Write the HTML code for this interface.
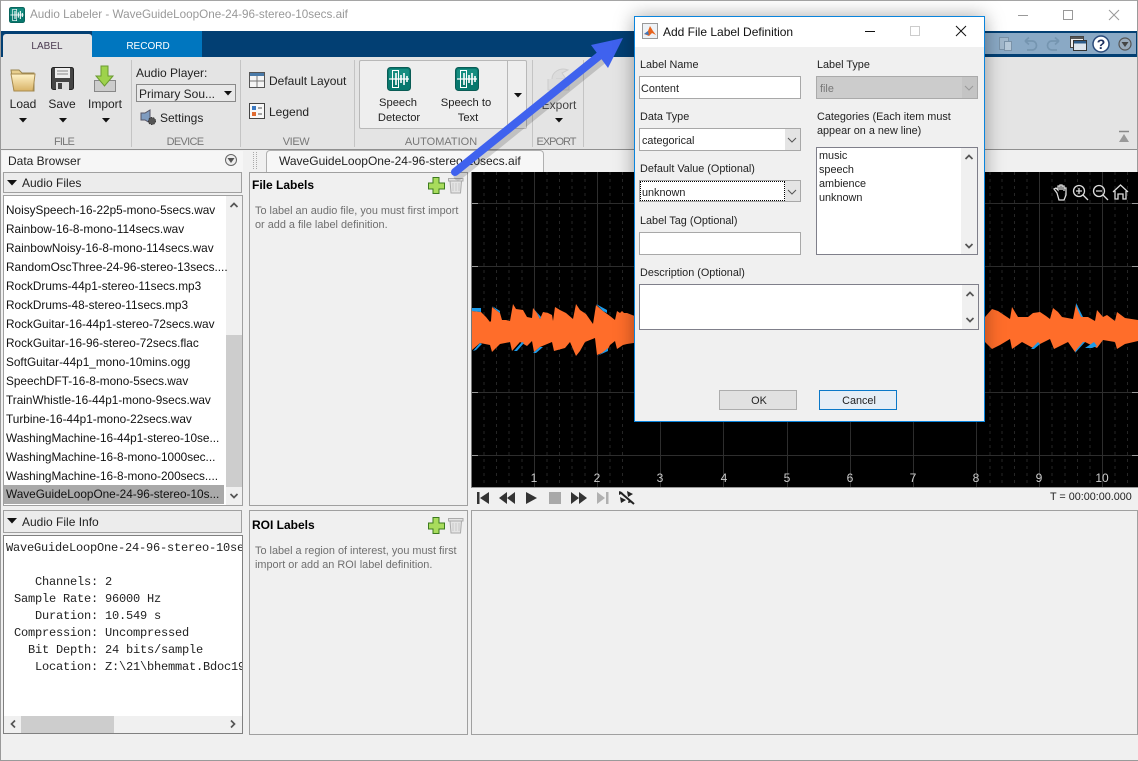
<!DOCTYPE html>
<html><head><meta charset="utf-8"><style>
html,body{margin:0;padding:0;width:1138px;height:761px;overflow:hidden;background:#f0f0f0}
body{position:relative;font-family:"Liberation Sans",sans-serif;font-size:12px;color:#222}
.a{position:absolute}
.t{position:absolute;white-space:nowrap;line-height:14px}
.c{transform:translateX(-50%);text-align:center}
.g{color:#777;font-size:11px}
.row{position:absolute;left:6px;white-space:nowrap;line-height:19px;height:19px;color:#111;font-size:11.8px}
.m{position:absolute;left:6px;white-space:pre;font-family:"Liberation Mono",monospace;font-size:12px;letter-spacing:-.2px;line-height:14px;color:#222}
.box{position:absolute;box-sizing:border-box;background:#fff;border:1px solid #a8a8a8}
.dk{border-color:#7f7f8a}
svg{position:absolute;overflow:visible}
.dl{font-size:10.85px;margin-top:1px}
.hint{color:#6f6f6f;font-size:10.9px;line-height:14px}
</style></head><body>
<svg width="0" height="0" style="position:absolute"><defs>
<g id="app"><rect x=".5" y=".5" width="23" height="23" rx="3" fill="#08786e" stroke="#0a5c55"/><rect x="2" y="2" width="20" height="10" rx="2" fill="#1f9b8c" opacity=".6"/><path d="M2 12H22" stroke="#fff" stroke-width="1.2"/><path d="M9 6V18M14 8V16M17 6V18M20 9V15" stroke="#fff" stroke-width="1.6"/><rect x="5.5" y="3.5" width="6" height="17" fill="none" stroke="#fff"/></g>
<path id="up" d="M-3.5 2L0-1.5L3.500 2" fill="none" stroke="#555" stroke-width="1.700"/>
<path id="dn" d="M-3.5-2L0 1.500L3.500-2" fill="none" stroke="#555" stroke-width="1.700"/>
<path id="tri" d="M-4-2H4L0 2.500Z" fill="#111"/>
</defs></svg>

<!-- window frame & titlebar -->
<div class="a" style="left:0;top:0;width:1138px;height:31px;background:#fff;border-top:1px solid #a5a5a5;box-sizing:border-box"></div>
<svg style="left:9px;top:7px" width="16" height="16" viewBox="0 0 24 24"><use href="#app"/></svg>
<div class="t" style="left:30px;top:8px;color:#999;font-size:11.700px">Audio Labeler - WaveGuideLoopOne-24-96-stereo-10secs.aif</div>
<svg style="left:0;top:0" width="1138" height="31"><path d="M1018 15.500H1028" stroke="#999"/><rect x="1063.500" y="10.500" width="9" height="9" fill="none" stroke="#999"/><path d="M1109 10L1119 20M1119 10L1109 20" stroke="#999"/></svg>

<!-- tab strip -->
<div class="a" style="left:1px;top:31px;width:1136px;height:26px;background:#023f73"></div>
<div class="a" style="left:92px;top:31px;width:110px;height:26px;background:#0076bf"></div>
<div class="a" style="left:3px;top:34px;width:89px;height:23px;background:#e4e4e4;border-radius:3px 3px 0 0"></div>
<div class="t c" style="left:47px;top:39.500px;color:#4a3a50;font-size:10px;">LABEL</div>
<div class="t c" style="left:148px;top:39.500px;color:#fff;font-size:10px;">RECORD</div>
<div class="a" style="left:985px;top:33px;width:151px;height:21px;background:#8aa9c5"></div>
<svg style="left:985px;top:33px" width="151" height="21">
<rect x="14.500" y="4.500" width="9" height="12" fill="#a2b8cc" stroke="#7a92a8"/><rect x="19.500" y="8.500" width="7" height="9" fill="#b6c8d8" stroke="#7a92a8"/>
<path d="M40 8H47C53 8 53 17 47 17H42M40 8L44 4.500M40 8L44 11.500" fill="none" stroke="#7595b0" stroke-width="1.700"/>
<path d="M74 8H67C61 8 61 17 67 17H72M74 8L70 4.500M74 8L70 11.500" fill="none" stroke="#7595b0" stroke-width="1.700"/>
<rect x="85.500" y="3.500" width="13" height="11" fill="#eee" stroke="#444"/><rect x="86" y="4" width="12" height="2" fill="#555"/><rect x="88.500" y="7.500" width="13" height="10" fill="#dce4ec" stroke="#333"/><rect x="89" y="8" width="12" height="2.500" fill="#2d5c8a"/>
<circle cx="116" cy="11" r="8" fill="#fff" stroke="#2a4a7a" stroke-width="1.500"/><text x="116" y="16" text-anchor="middle" font-family="Liberation Sans" font-size="14" font-weight="bold" fill="#1d2f5e">?</text>
<circle cx="140" cy="11" r="6" fill="#9ab" stroke="#555" stroke-width="1.200"/><path d="M136.500 9H143.500L140 14Z" fill="#444"/>
</svg>

<!-- ribbon -->
<div class="a" style="left:1px;top:57px;width:1136px;height:92px;background:#e4e4e4;border-bottom:1px solid #8f8f8f;box-sizing:content-box"></div>
<div class="a" style="left:131px;top:60px;width:1px;height:87px;background:#c4c4c4"></div>
<div class="a" style="left:240px;top:60px;width:1px;height:87px;background:#c4c4c4"></div>
<div class="a" style="left:354px;top:60px;width:1px;height:87px;background:#c4c4c4"></div>
<div class="a" style="left:532px;top:60px;width:1px;height:87px;background:#c4c4c4"></div>
<div class="a" style="left:583px;top:60px;width:1px;height:87px;background:#c4c4c4"></div>
<div class="a" style="left:359px;top:60px;width:168px;height:69px;box-sizing:border-box;background:#eee;border:1px solid #b8b8b8;border-radius:2px"></div>
<div class="a" style="left:507px;top:60px;width:1px;height:69px;background:#b8b8b8"></div>
<svg style="left:0;top:57px" width="1138" height="92">
<defs><linearGradient id="fo" x1="0" y1="0" x2="0" y2="1"><stop offset="0" stop-color="#fff3c8"/><stop offset="1" stop-color="#d8b266"/></linearGradient></defs>
<path d="M11 13H19L22 16H34V34H14Z" fill="#e8cf8e" stroke="#9a8650"/><path d="M11 17H35L33 34H14Z" fill="url(#fo)" stroke="#a88c50"/>
<rect x="51.500" y="10.500" width="22" height="22" rx="2" fill="#444" stroke="#222"/><rect x="55" y="11" width="15" height="10" fill="#eee"/><path d="M57 14H68M57 17H68" stroke="#888"/><rect x="56" y="25" width="13" height="8" fill="#ddd"/><rect x="58" y="26" width="4" height="6" fill="#444"/>
<rect x="94.500" y="23.500" width="21" height="11" fill="#ccc" stroke="#888"/><path d="M101 9H108V19H113L104.500 29L96 19H101Z" fill="#9ed24c" stroke="#6a9a30"/>
<path d="M141 56H145L150 53V66L145 63H141Z" fill="#7f9cc0" stroke="#556"/><circle cx="152" cy="64" r="3.500" fill="#555" stroke="#333" stroke-dasharray="1.500 1"/>
<rect x="249.500" y="15.500" width="15" height="15" fill="#f5f5f5" stroke="#555"/><rect x="250" y="16" width="14" height="3" fill="#4a7aa8"/><path d="M257 19V30M250 24H264" stroke="#777"/>
<rect x="249.500" y="46.500" width="15" height="15" fill="#f8f8f8" stroke="#444"/><rect x="252" y="49" width="4" height="4" fill="#3a78c0"/><rect x="252" y="55" width="4" height="4" fill="#e06a30"/><path d="M258 51H262M258 57H262" stroke="#555"/>
<path d="M552 22C552 15 560 10 568 13L562 16L566 22H556" fill="#dcdcdc" stroke="#ccc"/><path d="M548 22V33H569V22" fill="#dcdcdc" stroke="#ccc"/>
<use href="#tri" x="23" y="63"/><use href="#tri" x="63" y="63"/><use href="#tri" x="106" y="63"/><use href="#tri" x="518" y="38"/><use href="#tri" x="559" y="63"/></svg>
<div class="t c" style="left:23px;top:97px">Load</div>
<div class="t c" style="left:62px;top:97px">Save</div>
<div class="t c" style="left:105px;top:97px">Import</div>
<div class="t" style="left:136px;top:66px">Audio Player:</div>
<div class="a" style="left:136px;top:84px;width:100px;height:18px;box-sizing:border-box;background:#e8e8e8;border:1px solid #8a8a8a"></div>
<div class="t" style="left:139px;top:87px">Primary Sou...</div>
<svg style="left:228px;top:93px" width="1" height="1"><use href="#tri"/></svg>
<div class="t" style="left:160px;top:111px">Settings</div>
<div class="t" style="left:269px;top:74px">Default Layout</div>
<div class="t" style="left:269px;top:105px">Legend</div>
<svg style="left:387px;top:67px" width="24" height="24"><use href="#app"/></svg>
<svg style="left:455px;top:67px" width="24" height="24"><use href="#app"/></svg>
<div class="t c" style="left:398px;top:96px;font-size:11.200px">Speech</div>
<div class="t c" style="left:399px;top:111px;font-size:11.200px">Detector</div>
<div class="t c" style="left:466px;top:96px;font-size:11.200px">Speech to</div>
<div class="t c" style="left:468px;top:111px;font-size:11.200px">Text</div>
<div class="t c" style="left:559px;top:98px;color:#444">Export</div>
<div class="t c g" style="left:64px;top:135px;letter-spacing:-.8px">FILE</div>
<div class="t c g" style="left:185px;top:135px;letter-spacing:-.7px">DEVICE</div>
<div class="t c g" style="left:296px;top:135px;letter-spacing:-.4px">VIEW</div>
<div class="t c g" style="left:441px;top:135px">AUTOMATION</div>
<div class="t c g" style="left:556px;top:135px;letter-spacing:-1px">EXPORT</div>
<svg style="left:1119px;top:131px" width="16" height="14"><path d="M0 .500H10" stroke="#888" stroke-width="1.500"/><path d="M5 3L10 11H0Z" fill="#999"/></svg>

<!-- left panel -->
<div class="a" style="left:2px;top:151px;width:241px;height:21px;background:#f6f6f6"></div>
<div class="t" style="left:8px;top:154px;font-size:12px">Data Browser</div>
<svg style="left:225px;top:154px" width="12" height="12"><circle cx="6" cy="6" r="5.500" fill="#eee" stroke="#666"/><path d="M2.500 4H9.500L6 9Z" fill="#555"/></svg>
<div class="a" style="left:3px;top:172px;width:239px;height:21px;box-sizing:border-box;background:#ececec;border:1px solid #a0a0a0"></div>
<svg style="left:12px;top:183px" width="1" height="1"><path d="M-5-3H5L0 2.500Z" fill="#111"/></svg>
<div class="t" style="left:22px;top:176px">Audio Files</div>
<div class="a" style="left:3px;top:195px;width:240px;height:311px;background:#fff;box-sizing:border-box;border:1px solid #a0a0a0"></div>
<div class="a" style="left:226px;top:196px;width:16px;height:309px;background:#f0f0f0"></div>
<div class="a" style="left:226px;top:335px;width:16px;height:152px;background:#cdcdcd"></div>
<svg style="left:234px;top:205px" width="1" height="1"><use href="#up"/></svg>
<svg style="left:234px;top:496px" width="1" height="1"><use href="#dn"/></svg>
<div class="a" style="left:4px;top:485px;width:220px;height:19px;background:#a9a9a9"></div>
<div class="row" style="top:201px">NoisySpeech-16-22p5-mono-5secs.wav</div>
<div class="row" style="top:220px">Rainbow-16-8-mono-114secs.wav</div>
<div class="row" style="top:239px">RainbowNoisy-16-8-mono-114secs.wav</div>
<div class="row" style="top:258px">RandomOscThree-24-96-stereo-13secs....</div>
<div class="row" style="top:277px">RockDrums-44p1-stereo-11secs.mp3</div>
<div class="row" style="top:296px">RockDrums-48-stereo-11secs.mp3</div>
<div class="row" style="top:315px">RockGuitar-16-44p1-stereo-72secs.wav</div>
<div class="row" style="top:334px">RockGuitar-16-96-stereo-72secs.flac</div>
<div class="row" style="top:353px">SoftGuitar-44p1_mono-10mins.ogg</div>
<div class="row" style="top:372px">SpeechDFT-16-8-mono-5secs.wav</div>
<div class="row" style="top:391px">TrainWhistle-16-44p1-mono-9secs.wav</div>
<div class="row" style="top:410px">Turbine-16-44p1-mono-22secs.wav</div>
<div class="row" style="top:429px">WashingMachine-16-44p1-stereo-10se...</div>
<div class="row" style="top:448px">WashingMachine-16-8-mono-1000sec...</div>
<div class="row" style="top:467px">WashingMachine-16-8-mono-200secs....</div>
<div class="row" style="top:485px">WaveGuideLoopOne-24-96-stereo-10s...</div>
<div class="a" style="left:3px;top:510px;width:239px;height:23px;box-sizing:border-box;background:#ececec;border:1px solid #a0a0a0"></div>
<svg style="left:12px;top:521px" width="1" height="1"><path d="M-5-3H5L0 2.500Z" fill="#111"/></svg>
<div class="t" style="left:22px;top:515px">Audio File Info</div>
<div class="a" style="left:3px;top:535px;width:240px;height:199px;box-sizing:border-box;background:#fff;border:1px solid #808080;overflow:hidden">
<div class="m" style="left:2px;top:5px">WaveGuideLoopOne-24-96-stereo-10secs.aif</div>
<div class="m" style="left:3px;top:39px">    Channels: 2</div>
<div class="m" style="left:3px;top:56px"> Sample Rate: 96000 Hz</div>
<div class="m" style="left:3px;top:73px">    Duration: 10.549 s</div>
<div class="m" style="left:3px;top:90px"> Compression: Uncompressed</div>
<div class="m" style="left:3px;top:107px">   Bit Depth: 24 bits/sample</div>
<div class="m" style="left:3px;top:124px">    Location: Z:\21\bhemmat.Bdoc19b.j1051...</div>
<div class="a" style="left:0;top:180px;width:238px;height:17px;background:#f0f0f0"></div>
<div class="a" style="left:17px;top:180px;width:93px;height:17px;background:#cdcdcd"></div>
<svg style="left:9px;top:188px" width="1" height="1"><path d="M2-3.500L-1.500 0L2 3.500" fill="none" stroke="#555" stroke-width="1.700"/></svg>
<svg style="left:229px;top:188px" width="1" height="1"><path d="M-2-3.500L1.500 0L-2 3.500" fill="none" stroke="#555" stroke-width="1.700"/></svg>
</div>

<!-- doc tab -->
<svg style="left:252px;top:152px" width="8" height="18"><path d="M1.500 0V18M4.500 0V18" stroke="#aaa" stroke-dasharray="1 1"/></svg>
<div class="a" style="left:266px;top:150px;width:278px;height:23px;box-sizing:border-box;background:#f7f7f7;border:1px solid #b0b0b0;border-bottom:0;border-radius:4px 4px 0 0"></div>
<div class="t" style="left:279px;top:154px">WaveGuideLoopOne-24-96-stereo-10secs.aif</div>

<!-- label panels -->
<div class="a" style="left:249px;top:172px;width:219px;height:334px;box-sizing:border-box;background:#f0f0f0;border:1px solid #a0a0a0"></div>
<div class="t" style="left:252px;top:178px;font-weight:bold;font-size:12px;color:#000">File Labels</div>
<div class="t hint" style="left:255px;top:204px">To label an audio file, you must first import<br>or add a file label definition.</div>
<div class="a" style="left:249px;top:510px;width:219px;height:225px;box-sizing:border-box;background:#f0f0f0;border:1px solid #a0a0a0"></div>
<div class="t" style="left:252px;top:518px;font-weight:bold;font-size:12px;color:#000">ROI Labels</div>
<div class="t hint" style="left:255px;top:544px">To label a region of interest, you must first<br>import or add an ROI label definition.</div>
<svg style="left:0;top:0" width="480" height="540">
<path d="M433 177.500H439V183H444.500V189H439V193.500H433V189H428.500V183H433Z" fill="#a8dc5c" stroke="#3c7a1e"/>
<path d="M433 517.500H439V523H444.500V529H439V533.500H433V529H428.500V523H433Z" fill="#a8dc5c" stroke="#3c7a1e"/>
<path d="M448.500 178.500H463V181H448.500ZM450 181H461.500L460.500 193H451Z" fill="#e4e4e4" stroke="#aaa"/><path d="M453 183V191M456 183V191M459 183V191" stroke="#c8c8c8"/>
<path d="M448.500 518.500H463V521H448.500ZM450 521H461.500L460.500 533H451Z" fill="#e4e4e4" stroke="#aaa"/><path d="M453 523V531M456 523V531M459 523V531" stroke="#c8c8c8"/>
</svg>

<!-- plot -->
<div class="a" style="left:471px;top:172px;width:667px;height:316px;background:#000;border-left:1px solid #777;box-sizing:border-box;border-bottom:1px solid #999"></div>
<svg style="left:472px;top:172px" width="666" height="315" viewBox="472 172 666 315">
<g stroke="#2e2e2e" fill="none"><path d="M534.500 172V487M597.500 172V487M660.500 172V487M723.500 172V487M787.500 172V487M850.500 172V487M913.500 172V487M976.500 172V487M1039.500 172V487M1102.500 172V487"/>
<path d="M472 203.500H1138M472 266.500H1138M472 329.500H1138M472 392.500H1138M472 455.500H1138"/></g>
<g stroke="#262626" fill="none" stroke-dasharray="3 4"><path d="M484 172V487M496.500 172V487M509 172V487M522 172V487M547 172V487M559.500 172V487M572 172V487M585 172V487M610 172V487M622.500 172V487M990 172V487M1002 172V487M1014.500 172V487M1027 172V487M1052 172V487M1065 172V487M1077.500 172V487M1090 172V487M1115 172V487M1127.500 172V487"/></g>
<path d="M472 203.500H478M472 266.500H478M472 392.500H478M472 455.500H478M1132 203.500H1138M1132 266.500H1138M1132 392.500H1138M1132 455.500H1138" stroke="#999"/>
<g fill="#ff6d2a">
<polygon points="472,311 481,312 486,317 490,322 491,321 492,307 496,310 500,313 502,320 506,320 510,321 513,304 516,309 523,310 527,317 532,318 533,308 537,313 540,319 543,312 548,313 552,315 553,321 555,307 560,310 566,313 573,319 576,304 580,310 586,314 593,324 596,305 603,311 610,316 615,320 617,311 620,313 622,311 624,313 627,313 640,318 640,342 627,344 623,345 617,349 615,341 610,345 607,351 597,355 595,338 585,342 580,351 576,356 570,342 565,348 554,351 552,342 540,347 534,352 532,341 527,346 520,342 512,351 510,342 500,344 492,352 490,345 480,343 472,350"/>
<polygon points="980,319 985,317 992,309 998,311 1004,315 1010,319 1012,307 1018,317 1028,317 1033,313 1040,312 1046,316 1050,319 1053,308 1058,312 1062,317 1073,319 1076,304 1082,317 1088,317 1095,321 1097,310 1103,317 1107,315 1115,321 1117,312 1125,318 1138,320 1138,341 1125,344 1117,349 1115,342 1103,340 1097,348 1093,346 1085,342 1080,347 1075,352 1068,342 1054,349 1050,339 1040,344 1033,348 1022,342 1012,349 1010,339 1000,345 992,349 985,342 980,342"/>
</g>
<g fill="#1e9be8">
<polygon points="472,308 481,308 481,312 472,311"/>
<polygon points="492,306 500,311 500,313 496,310"/>
<polygon points="533,308 541,317 540,319 537,313"/>
<polygon points="596,304 607,310 607,313 603,311"/>
<polygon points="473,351 480,343 482,344 476,350"/>
<polygon points="514,351 522,342 524,343 517,351"/>
<polygon points="533,353 540,347 543,347 536,353"/>
<polygon points="597,356 608,351 608,348 602,353"/>
<polygon points="1076,303 1083,317 1081,317 1076,306"/>
<polygon points="1075,353 1085,342 1083,342 1076,350"/>
<polygon points="1085,348 1094,342 1097,346 1092,348"/>
<polygon points="1031,349 1038,342 1040,344 1034,349"/>
</g>
</svg>
<div class="t c" style="left:534px;top:471px;color:#ccc">1</div>
<div class="t c" style="left:597px;top:471px;color:#ccc">2</div>
<div class="t c" style="left:660px;top:471px;color:#ccc">3</div>
<div class="t c" style="left:724px;top:471px;color:#ccc">4</div>
<div class="t c" style="left:787px;top:471px;color:#ccc">5</div>
<div class="t c" style="left:850px;top:471px;color:#ccc">6</div>
<div class="t c" style="left:913px;top:471px;color:#ccc">7</div>
<div class="t c" style="left:976px;top:471px;color:#ccc">8</div>
<div class="t c" style="left:1039px;top:471px;color:#ccc">9</div>
<div class="t c" style="left:1102px;top:471px;color:#ccc">10</div>
<svg style="left:1052px;top:183px" width="80" height="20" fill="none" stroke="#ddd" stroke-width="1.300">
<path d="M5 10L2 6L4 5L6 7V3H8V7V2H10V7V3H12V8V5H14V12L12 17H7Z"/>
<circle cx="27" cy="8" r="5.500"/><path d="M31 12L36 17M24 8H30M27 5V11"/>
<circle cx="47" cy="8" r="5.500"/><path d="M51 12L56 17M44 8H50"/>
<path d="M61 9L68.500 2L76 9M63 8V16H66V11H71V16H74V8"/>
</svg>

<!-- bottom -->
<div class="a" style="left:471px;top:510px;width:667px;height:225px;box-sizing:border-box;background:#f0f0f0;border:1px solid #a0a0a0"></div>
<div class="a" style="left:0;top:735px;width:1138px;height:25px;background:#f0f0f0"></div>
<div class="a" style="left:0;top:760px;width:1138px;height:1px;background:#9a9a9a"></div>
<div class="a" style="left:0;top:0;width:1px;height:761px;background:#9a9a9a"></div>
<div class="a" style="left:1137px;top:0;width:1px;height:172px;background:#9a9a9a"></div>
<svg style="left:477px;top:490px" width="160" height="16">
<rect x="0" y="2" width="2.500" height="12" fill="#333"/><path d="M12 2V14L3 8Z" fill="#333"/>
<path d="M30 2V14L22 8ZM38 2V14L30 8Z" fill="#333"/>
<path d="M49 2V14L60 8Z" fill="#333"/>
<rect x="72" y="2" width="12" height="12" fill="#a8a8a8"/>
<path d="M94 2V14L102 8ZM102 2V14L110 8Z" fill="#333"/>
<path d="M120 2V14L128 8Z" fill="#b0b0b0"/><rect x="129" y="2" width="2.500" height="12" fill="#b0b0b0"/>
<path d="M143 2L157 14" stroke="#222" stroke-width="2"/><path d="M150 1L156 4L151 7ZM143 7L149 10L144 13ZM152 9L156 12L151 13ZM142 1L146 3L142 5Z" fill="#222"/>
</svg>
<div class="t" style="left:1050px;top:490px;font-size:10.800px">T = 00:00:00.000</div>

<!-- arrow -->
<svg style="left:0;top:0" width="640" height="200">
<g opacity=".18" transform="translate(3,4)"><path d="M455 172L604 52" stroke="#222" stroke-width="9" stroke-linecap="round"/></g>
<path d="M455 172L604 52" stroke="#3f62ee" stroke-width="8" stroke-linecap="round"/>
<path d="M623 38L591 45L608 68Z" fill="#3f62ee"/>
</svg>

<!-- dialog -->
<div class="a" style="left:634px;top:16px;width:351px;height:406px;box-sizing:border-box;background:#f0f0f0;border:1px solid #0a84dc;box-shadow:0 0 18px rgba(0,0,0,.35)"></div>
<div class="a" style="left:635px;top:17px;width:349px;height:30px;background:#fff"></div>
<svg style="left:642px;top:23px" width="16" height="16"><rect x=".5" y=".5" width="15" height="15" fill="#eef2f6" stroke="#999"/><path d="M2 11L6 8L8 3L11 8L14 12L10 10L7 13Z" fill="#e8641e"/><path d="M2 11L6 8L7 12Z" fill="#3a78c0"/></svg>
<div class="t" style="left:663px;top:25px;font-size:12px;color:#111">Add File Label Definition</div>
<svg style="left:630px;top:10px" width="360" height="40"><path d="M235 21.500H245" stroke="#111"/><rect x="280.500" y="16.500" width="9" height="9" fill="none" stroke="#ccc"/><path d="M326 16L336 26M336 16L326 26" stroke="#111"/></svg>

<div class="t dl" style="left:640px;top:57px">Label Name</div>
<div class="t dl" style="left:817px;top:57px">Label Type</div>
<div class="box" style="left:639px;top:76px;width:162px;height:23px"></div>
<div class="t dl" style="left:641px;top:81px">Content</div>
<div class="box" style="left:816px;top:76px;width:162px;height:23px;background:#ccc;border-color:#aaa"></div>
<div class="t dl" style="left:820px;top:81px;color:#777">file</div>
<div class="a" style="left:962px;top:77px;width:15px;height:21px;background:#c4c4c4"></div>
<svg style="left:969px;top:88px" width="1" height="1"><path d="M-4-2L0 2L4-2" fill="none" stroke="#999"/></svg>

<div class="t dl" style="left:640px;top:109px">Data Type</div>
<div class="box" style="left:639px;top:128px;width:162px;height:23px"></div>
<div class="t dl" style="left:642px;top:133px">categorical</div>
<div class="a" style="left:785px;top:129px;width:15px;height:21px;background:#e4e4e4"></div>
<svg style="left:792px;top:140px" width="1" height="1"><path d="M-4-2L0 2L4-2" fill="none" stroke="#555"/></svg>

<div class="t dl" style="left:640px;top:161px">Default Value (Optional)</div>
<div class="box" style="left:639px;top:180px;width:162px;height:22px"></div>
<div class="a" style="left:640px;top:181px;width:145px;height:20px;box-sizing:border-box;border:1px dotted #000"></div>
<div class="t dl" style="left:642px;top:185px">unknown</div>
<div class="a" style="left:785px;top:181px;width:15px;height:20px;background:#e4e4e4"></div>
<svg style="left:792px;top:192px" width="1" height="1"><path d="M-4-2L0 2L4-2" fill="none" stroke="#555"/></svg>

<div class="t dl" style="left:640px;top:213px">Label Tag (Optional)</div>
<div class="box" style="left:639px;top:232px;width:162px;height:23px"></div>
<div class="t dl" style="left:640px;top:265px">Description (Optional)</div>
<div class="box dk" style="left:639px;top:284px;width:340px;height:46px"></div>
<div class="a" style="left:962px;top:285px;width:16px;height:44px;background:#f0f0f0"></div>
<svg style="left:970px;top:294px" width="1" height="1"><use href="#up"/></svg>
<svg style="left:970px;top:320px" width="1" height="1"><use href="#dn"/></svg>

<div class="t dl" style="left:817px;top:109px;line-height:14px">Categories (Each item must<br>appear on a new line)</div>
<div class="box dk" style="left:816px;top:147px;width:162px;height:108px"></div>
<div class="a" style="left:961px;top:148px;width:16px;height:106px;background:#f0f0f0"></div>
<svg style="left:969px;top:157px" width="1" height="1"><use href="#up"/></svg>
<svg style="left:969px;top:246px" width="1" height="1"><use href="#dn"/></svg>
<div class="t dl" style="left:819px;top:148px;line-height:14px">music<br>speech<br>ambience<br>unknown</div>

<div class="a" style="left:719px;top:390px;width:78px;height:20px;box-sizing:border-box;background:#e1e1e1;border:1px solid #adadad"></div>
<div class="t c dl" style="left:759px;top:393px">OK</div>
<div class="a" style="left:819px;top:390px;width:78px;height:20px;box-sizing:border-box;background:#e5eef6;border:1px solid #0a78c8"></div>
<div class="t c dl" style="left:859px;top:393px">Cancel</div>
</body></html>
